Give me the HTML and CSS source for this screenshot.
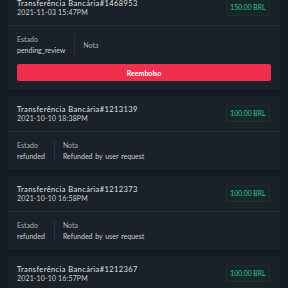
FILE: index.html
```html
<!DOCTYPE html>
<html lang="pt">
<head>
<meta charset="utf-8">
<link rel="stylesheet" href="styles.css">
</head>
<body>
<div class="list">
  <div class="card">
    <div class="head">
      <div class="info">
        <div class="title">Transferência Bancária#1468953</div>
        <div class="date">2021-11-03 15:47PM</div>
      </div>
      <div class="badge">150.00 BRL</div>
    </div>
    <div class="body">
      <div class="row">
        <div class="col first">
          <div class="label">Estado</div>
          <div class="value">pending_review</div>
        </div>
        <div class="col">
          <div class="label">Nota</div>
        </div>
      </div>
      <button class="btn">Reembolso</button>
    </div>
  </div>

  <div class="card">
    <div class="head">
      <div class="info">
        <div class="title">Transferência Bancária#1213139</div>
        <div class="date">2021-10-10 18:38PM</div>
      </div>
      <div class="badge">100.00 BRL</div>
    </div>
    <div class="body">
      <div class="row">
        <div class="col first">
          <div class="label">Estado</div>
          <div class="value">refunded</div>
        </div>
        <div class="col">
          <div class="label">Nota</div>
          <div class="value">Refunded by user request</div>
        </div>
      </div>
    </div>
  </div>

  <div class="card">
    <div class="head">
      <div class="info">
        <div class="title">Transferência Bancária#1212373</div>
        <div class="date">2021-10-10 16:58PM</div>
      </div>
      <div class="badge">100.00 BRL</div>
    </div>
    <div class="body">
      <div class="row">
        <div class="col first">
          <div class="label">Estado</div>
          <div class="value">refunded</div>
        </div>
        <div class="col">
          <div class="label">Nota</div>
          <div class="value">Refunded by user request</div>
        </div>
      </div>
    </div>
  </div>

  <div class="card">
    <div class="head">
      <div class="info">
        <div class="title">Transferência Bancária#1212367</div>
        <div class="date">2021-10-10 16:57PM</div>
      </div>
      <div class="badge">100.00 BRL</div>
    </div>
    <div class="body">
      <div class="row">
        <div class="col first">
          <div class="label">Estado</div>
          <div class="value">refunded</div>
        </div>
        <div class="col">
          <div class="label">Nota</div>
          <div class="value">Refunded by user request</div>
        </div>
      </div>
    </div>
  </div>
</div>
</body>
</html>
```

FILE: styles.css
```css
html, body {
  margin: 0;
  padding: 0;
  background: #131920;
  height: 288px;
  overflow: hidden;
}
body {
  font-family: Lato, "Noto Sans", sans-serif;
  color: #d6dbe0;
  font-size: 7px;
}
.list {
  margin-top: -10px;
  padding: 0 8px;
  display: flex;
  flex-direction: column;
  gap: 7px;
}
.card {
  background: #1b2129;
  border-radius: 3px;
}
.head {
  display: flex;
  justify-content: space-between;
  align-items: flex-start;
  padding: 9px 10px 8px 9px;
  border-bottom: 1px solid #242b34;
}
.title, .date {
  line-height: 9px;
}
.title {
  font-size: 7.5px;
  letter-spacing: 0.4px;
  color: #dde1e6;
}
.date {
  color: #c6ccd2;
  letter-spacing: 0.15px;
}
.badge {
  padding: 3px 3.5px;
  line-height: 9px;
  background: #172729;
  border: 1px solid #1d302f;
  border-radius: 2px;
  color: #2cc28d;
  font-size: 6.8px;
}
.body {
  padding: 8px 9px 8px;
}
.row {
  display: flex;
}
.col {
  display: flex;
  flex-direction: column;
  justify-content: center;
}
.col.first {
  padding-right: 9px;
  margin-right: 8px;
  border-right: 1px solid #29303a;
}
.label {
  line-height: 10px;
  color: #a9b0b7;
}
.value {
  line-height: 10px;
  margin-top: 1px;
  color: #c9ced4;
  word-spacing: 1px;
}
.btn {
  display: block;
  width: 100%;
  margin-top: 9px;
  height: 17px;
  border: 0;
  border-radius: 2px;
  background: #ef2f4e;
  color: #ffffff;
  font-family: Lato, "Noto Sans", sans-serif;
  font-weight: 700;
  font-size: 7px;
  padding: 0;
}
```
